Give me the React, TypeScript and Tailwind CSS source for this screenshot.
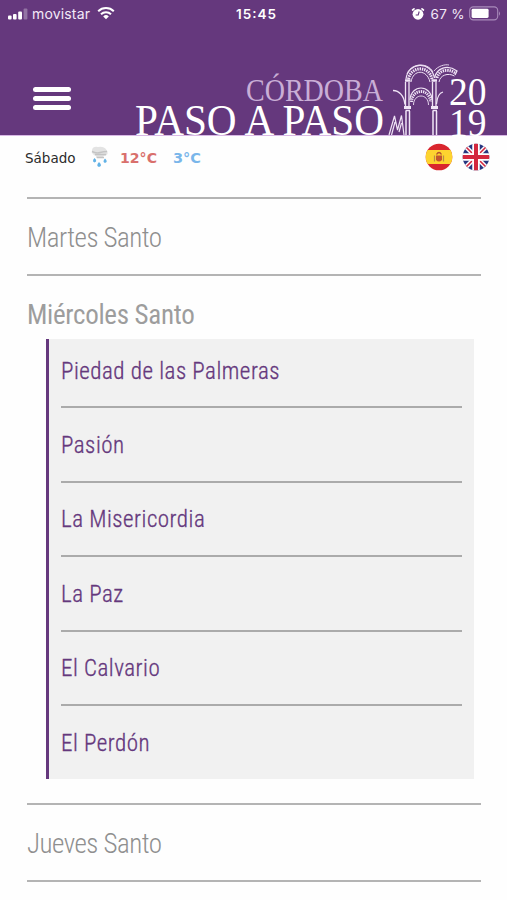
import React from "react";

const brotherhoods = [
  "Piedad de las Palmeras",
  "Pasión",
  "La Misericordia",
  "La Paz",
  "El Calvario",
  "El Perdón",
];

const StatusBar = () => {
  return (
    <div className="flex h-7 items-center justify-between pl-2 pr-1.5 font-['Inter',sans-serif] text-white">
      <div className="flex w-[180px] items-center">
        <svg width="20" height="12" viewBox="0 0 20 12" fill="#fff" className="-mt-px">
          <rect x="0" y="7.5" width="3.6" height="4" rx="1" />
          <rect x="5" y="6" width="3.6" height="5.5" rx="1" />
          <rect x="10.2" y="3.5" width="3.8" height="8" rx="1" />
          <rect x="15.6" y="0.5" width="3.8" height="11" rx="1" opacity="0.3" />
        </svg>
        <svg width="60" height="20" viewBox="0 0 60 20" className="ml-1">
          <text x="0" y="14.5" fontSize="14" fill="#f3e9f8" textLength="58">
            movistar
          </text>
        </svg>
        <svg width="18" height="14" viewBox="0 0 18 14" className="-mt-0.5 ml-[5px]" fill="none" stroke="#fff" strokeWidth="2">
          <path d="M1.2 5.2a11.2 11.2 0 0 1 15.6 0" />
          <path d="M4 8.3a7 7 0 0 1 10 0" />
          <path d="M6.2 10.4a4 4 0 0 1 5.6 0L9 13.2z" fill="#fff" stroke="none" />
        </svg>
      </div>
      <svg width="42" height="20" viewBox="0 0 42 20">
        <text x="2" y="14.5" fontSize="13.5" fontWeight="600" fill="#fff" textLength="40">
          15:45
        </text>
      </svg>
      <div className="flex w-[180px] items-center justify-end">
        <svg width="14" height="14" viewBox="0 0 14 14" fill="#fff" className="-mt-px">
          <circle cx="7" cy="7.3" r="5.4" />
          <path d="M1.6 3 3 1.9M12.4 3 11 1.9" stroke="#fff" strokeWidth="1.7" strokeLinecap="round" />
          <path d="M8.2 4.5 7.2 8H4.7" fill="none" stroke="#65387d" strokeWidth="1.1" />
        </svg>
        <svg width="36" height="20" viewBox="0 0 36 20" className="ml-[5px]">
          <text x="0.5" y="14.5" fontSize="13.5" fill="#f3e9f8" textLength="34">
            67 %
          </text>
        </svg>
        <svg width="32" height="15" viewBox="0 0 32 15" className="ml-[3px] -mt-px">
          <rect x="0.7" y="0.9" width="28" height="13" rx="3.6" fill="none" stroke="#a98abb" strokeWidth="1.1" />
          <rect x="2.6" y="2.8" width="17" height="9.2" rx="1.4" fill="#fff" />
          <path d="M30 5.2q2 2.3 0 4.6z" fill="#a98abb" />
        </svg>
      </div>
    </div>
  );
};

const Logo = () => {
  return (
    <svg width="360" height="75" viewBox="130 60 360 75" className="overflow-visible font-['Liberation_Serif',serif]">
      <text x="246" y="100.5" fontSize="32" fill="#c9aed6" textLength="137" lengthAdjust="spacingAndGlyphs">
        CÓRDOBA
      </text>
      <text x="135" y="135" fontSize="45" fill="#fff" textLength="249" lengthAdjust="spacingAndGlyphs">
        PASO A PASO
      </text>
      <g fill="none" stroke="#f0e4f6">
        {/* horseshoe arches */}
        <path d="M406 79C408 62 431 60 434.5 78" strokeWidth="1.2" />
        <path d="M408.5 79C411 66 429 65 432 79" strokeWidth="3" strokeDasharray="1.4 0.9" />
        <path d="M411 82C413 69 427 69 430 82" strokeWidth="1" />
        <path d="M407 74c3-10 20-13 26-2" strokeWidth="0.9" />
        <path d="M434.5 78c2-10 13-14 22.500-7l-2 4" strokeWidth="1.3" />
        <path d="M437 78c2-8 11-10 18-5" strokeWidth="3" strokeDasharray="1.4 0.9" />
        <path d="M439 82c1-7 9-9.500 15.500-6" strokeWidth="1" />
        <path d="M434 71c4-5 11-7 15-6" strokeWidth="0.9" />
        <path d="M410 100c1-16 21-16 22 0" strokeWidth="1.1" />
        <path d="M411.500 102c1-14 18-14 19 0" strokeWidth="2.8" strokeDasharray="1.3 0.9" />
        <path d="M413.500 105c0-12 15-12 15 0" strokeWidth="0.9" />
        <path d="M393 90.500c6 0 11 5 12 14" strokeWidth="1.4" />
        <path d="M443 92c-4 1-6 6-6.500 12" strokeWidth="1.2" />
        {/* columns */}
        <path d="M405.500 82v24M409 82v24M432.500 82v24M436 82v24" strokeWidth="1.3" />
        <path d="M406 111v24M409.500 111v24M433 111v24M436.500 111v24" strokeWidth="1.5" />
        <path d="M405 80.500h5.500M431.500 80.500h5.500" strokeWidth="2.4" />
        <path d="M404 107.500h7M431 107.500h7" strokeWidth="2.8" />
        <path d="M405.500 110.500h4.500M432.500 110.500h4.500" strokeWidth="1.5" />
        <path d="M389 135l5.500-19 3 14 4-14.500 2.500 19.500M391.500 135l3.500-13M399 132l2.500-9" strokeWidth="1.2" />
      </g>
      <text x="449" y="105" fontSize="39" fill="#fff" textLength="37.5" lengthAdjust="spacingAndGlyphs">
        20
      </text>
      <text x="449" y="135.5" fontSize="39" fill="#fff" textLength="37.5" lengthAdjust="spacingAndGlyphs">
        19
      </text>
    </svg>
  );
};

const WeatherIcon = () => {
  return (
    <svg width="20" height="24" viewBox="0 0 20 24">
      <path d="M2 5Q3 1 8 2q6-1 8.500 3 1.500 1 1 4-1 2-4 2l-1 2H6V11Q1 9 2 5z" fill="#e3e3e3" />
      <path d="M2 6.500q4 2 8 1t7-1M5 9.500h11M7 12.500h7" fill="none" stroke="#c4c4c4" strokeWidth="1.4" />
      <g fill="#62b2e6">
        <path d="M4.500 13q3.500 3.500 0 4.500-3-1 0-4.500zM15 13.500q3.500 3.500 0 4.500-3-1 0-4.500zM9 17q4 3.800 0 5-3.500-1 0-5z" />
      </g>
    </svg>
  );
};

const Flags = () => {
  return (
    <div className="flex gap-[9px]">
      <svg width="28" height="28" viewBox="0 0 28 28">
        <clipPath id="es">
          <circle cx="14" cy="14" r="13.3" />
        </clipPath>
        <g clipPath="url(#es)">
          <rect width="28" height="28" fill="#d9262e" />
          <rect y="7" width="28" height="14" fill="#fdd42f" />
          <path d="M11 12.500h6v4.500q-3 3-6 0z" fill="#c4562d" />
          <path d="M11.500 11.500q2.500-4 5 0" stroke="#b5522f" strokeWidth="1.4" fill="none" />
          <path d="M9.500 12.500v6M18.500 12.500v6" stroke="#b98a4a" strokeWidth="1.2" />
        </g>
      </svg>
      <svg width="28" height="28" viewBox="0 0 28 28">
        <clipPath id="uk">
          <circle cx="14" cy="14" r="13.3" />
        </clipPath>
        <g clipPath="url(#uk)">
          <rect width="28" height="28" fill="#27367f" />
          <path d="M2 2l24 24M26 2 2 26" stroke="#fff" strokeWidth="4.5" />
          <path d="M2 2l24 24M26 2 2 26" stroke="#d3273e" strokeWidth="1.6" />
          <path d="M14 0v28M0 14h28" stroke="#fff" strokeWidth="7.5" />
          <path d="M14 0v28M0 14h28" stroke="#d3273e" strokeWidth="4" />
        </g>
      </svg>
    </div>
  );
};

const Weather = () => {
  return (
    <div className="flex h-[45px] items-center justify-between pb-[3px] pl-[25px] pr-[17.5px] font-['DejaVu_Sans',sans-serif]">
      <div className="flex items-center">
        <svg width="52" height="20" viewBox="0 0 52 20">
          <text x="0" y="16" fontSize="13.5" fill="#2b2b2b" textLength="50.5" lengthAdjust="spacingAndGlyphs">
            Sábado
          </text>
        </svg>
        <div className="ml-[13px]">
          <WeatherIcon />
        </div>
        <svg width="40" height="20" viewBox="0 0 40 20" className="ml-2.5">
          <text x="0" y="16" fontSize="13.5" fontWeight="700" fill="#d9706c" textLength="37" lengthAdjust="spacingAndGlyphs">
            12°C
          </text>
        </svg>
        <svg width="30" height="20" viewBox="0 0 30 20" className="ml-[13px]">
          <text x="0" y="16" fontSize="13.5" fontWeight="700" fill="#7ab6ea" textLength="28" lengthAdjust="spacingAndGlyphs">
            3°C
          </text>
        </svg>
      </div>
      <Flags />
    </div>
  );
};

const App = () => {
  return (
    <div className="h-[900px] w-[507px] overflow-hidden bg-[#fefefe] font-['Roboto',sans-serif]">
      <header className="flex h-[135px] flex-col justify-between bg-[#65387d]">
        <StatusBar />
        <div className="flex items-end justify-between pl-[33px] pr-[17px]">
          <div className="mb-[25px] flex flex-col gap-1">
            <span className="h-[5px] w-[38px] rounded-full bg-white" />
            <span className="h-[5px] w-[38px] rounded-full bg-white" />
            <span className="h-[5px] w-[38px] rounded-full bg-white" />
          </div>
          <Logo />
        </div>
      </header>
      <div className="h-px bg-[#d9b8e6]" />
      <Weather />

      <main className="ml-[27px] mr-[26px] pt-4">
        <h2 className="flex h-[77px] items-center border-t-2 border-[#b4b4b4] pt-[3px] text-[27px] font-light tracking-[-0.5px] text-[#8f8f8f] [font-stretch:75%]">
          Martes Santo
        </h2>
        <section className="border-y-2 border-[#b4b4b4]">
          <h2 className="flex h-[63px] items-center pt-[15px] text-[27px] font-normal tracking-[-0.3px] text-[#9d9d9d] [font-stretch:75%]">
            Miércoles Santo
          </h2>
          <ul className="mb-6 ml-[19px] mr-[7px] border-l-[3px] border-[#65387d] bg-[#f1f1f1] pl-3 pr-3">
            {brotherhoods.map((name, index) => (
              <li
                key={index}
                className="flex h-[74.5px] items-center border-b-2 border-[#ababab] pt-[3px] text-[23px] font-light tracking-[0.5px] text-[#65387d] [-webkit-text-stroke:0.3px] [font-stretch:75%] first:h-[69px] first:pt-0 last:h-[73px] last:border-b-0"
              >
                {name}
              </li>
            ))}
          </ul>
        </section>
        <h2 className="flex h-[77px] items-center border-b-2 border-[#b4b4b4] pt-[3px] text-[27px] font-light tracking-[-0.5px] text-[#8f8f8f] [font-stretch:75%]">
          Jueves Santo
        </h2>
      </main>
    </div>
  );
};

export default App;
